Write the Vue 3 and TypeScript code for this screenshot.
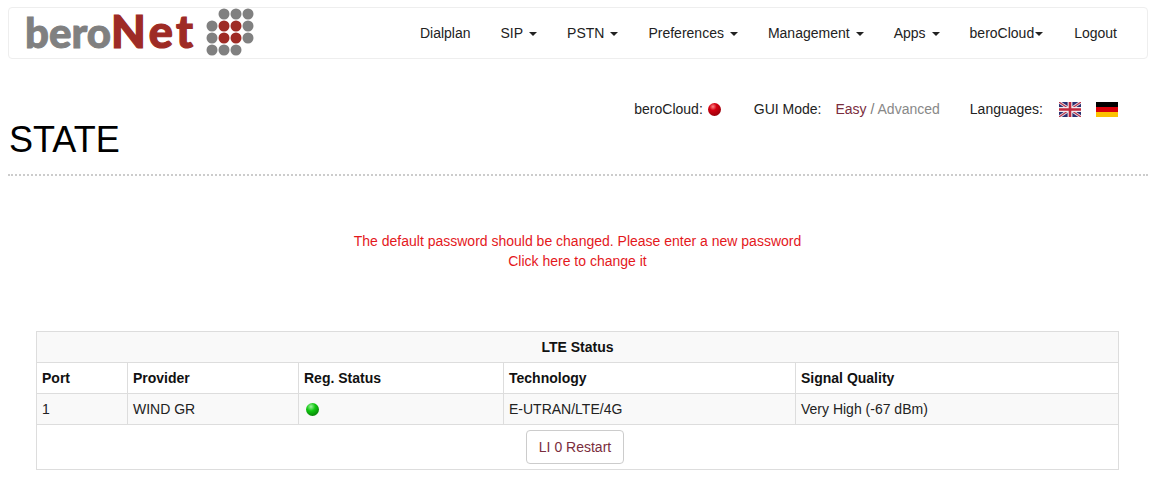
<script setup lang="ts">
const navItems: { label: string; caret: boolean; tight?: boolean }[] = [
  { label: 'Dialplan', caret: false },
  { label: 'SIP', caret: true },
  { label: 'PSTN', caret: true },
  { label: 'Preferences', caret: true },
  { label: 'Management', caret: true },
  { label: 'Apps', caret: true },
  { label: 'beroCloud', caret: true, tight: true },
  { label: 'Logout', caret: false },
]
const dots: { x: number; y: number; red: boolean }[] = [
  [18, 6, 0], [30, 6, 0], [42, 6, 0],
  [6, 18, 0], [18, 18, 1], [30, 18, 1], [42, 18, 0],
  [6, 30, 0], [18, 30, 1], [30, 30, 1], [42, 30, 0],
  [6, 42, 0], [18, 42, 0], [30, 42, 0],
].map(([x, y, r]) => ({ x, y, red: r === 1 }))
</script>

<template>
  <div class="page">
    <nav class="navbar">
      <a class="brand">
        <span class="wordmark"><span class="bero">bero</span><span class="net">Net</span></span>
        <svg class="dots" width="48" height="48" viewBox="0 0 48 48">
          <circle v-for="(d, i) in dots" :key="i" :cx="d.x" :cy="d.y" r="5.5" :fill="d.red ? '#9e2b25' : '#808080'" />
        </svg>
      </a>
      <ul class="nav">
        <li v-for="item in navItems" :key="item.label">
          {{ item.label }}<span v-if="item.caret" class="caret" :class="{ tight: item.tight }"></span>
        </li>
      </ul>
    </nav>

    <header class="head">
      <div class="status">
        <span class="label">beroCloud:</span>
        <span class="ball red"></span>
        <span class="label gui">GUI Mode:</span>
        <span class="modes"><a class="easy">Easy</a> / <a class="adv">Advanced</a></span>
        <span class="label lang">Languages:</span>
        <svg class="flag first" width="22" height="15" viewBox="0 0 60 40" preserveAspectRatio="none">
          <rect width="60" height="40" fill="#2b2f70" />
          <path d="M0 0L60 40M60 0L0 40" stroke="#e6dfe6" stroke-width="8" />
          <path d="M0 0L60 40M60 0L0 40" stroke="#b8344a" stroke-width="3" />
          <path d="M30 0V40M0 20H60" stroke="#f0ecf0" stroke-width="13" />
          <path d="M30 0V40M0 20H60" stroke="#c0283c" stroke-width="7" />
        </svg>
        <svg class="flag" width="22" height="15" viewBox="0 0 3 3" preserveAspectRatio="none">
          <rect width="3" height="1" y="0" fill="#000" />
          <rect width="3" height="1" y="1" fill="#d8000a" />
          <rect width="3" height="1" y="2" fill="#fcc200" />
        </svg>
      </div>
      <h1>STATE</h1>
    </header>

    <div class="notice">
      <div>The default password should be changed. Please enter a new password</div>
      <div>Click here to change it</div>
    </div>

    <table class="lte">
      <colgroup>
        <col class="c1" />
        <col class="c2" />
        <col class="c3" />
        <col class="c4" />
        <col />
      </colgroup>
      <tbody>
        <tr class="shade"><th colspan="5" class="title">LTE Status</th></tr>
        <tr>
          <th>Port</th>
          <th>Provider</th>
          <th>Reg. Status</th>
          <th>Technology</th>
          <th>Signal Quality</th>
        </tr>
        <tr class="shade">
          <td>1</td>
          <td>WIND GR</td>
          <td><span class="ball green"></span></td>
          <td>E-UTRAN/LTE/4G</td>
          <td>Very High (-67 dBm)</td>
        </tr>
        <tr>
          <td colspan="5" class="actions"><button type="button" class="btn">LI 0 Restart</button></td>
        </tr>
      </tbody>
    </table>
  </div>
</template>

<style>
html, body { margin: 0; background: #fff; }
</style>

<style scoped>
.page {
  font-family: "Liberation Sans", Arial, sans-serif;
  font-size: 14px;
  line-height: 20px;
  color: #333;
  height: 479px;
  overflow: hidden;
  box-sizing: border-box;
  padding-top: 7px;
}
.navbar {
  display: flex;
  justify-content: space-between;
  align-items: center;
  height: 52px;
  box-sizing: border-box;
  margin: 0 8px;
  border: 1px solid #eeeeee;
  border-radius: 4px;
  padding-right: 15px;
}
.brand {
  display: flex;
  align-items: center;
  padding-left: 16px;
}
.wordmark {
  font-family: Lato, sans-serif;
  font-weight: 900;
  font-size: 42px;
  line-height: 46px;
  width: 181px;
  margin-top: -3px;
  white-space: nowrap;
}
.bero {
  color: #808080;
  letter-spacing: 0;
  -webkit-text-stroke: 0.9px #808080;
}
.net {
  color: #9e2b25;
  font-size: 45px;
  letter-spacing: 3.5px;
  -webkit-text-stroke: 1.2px #9e2b25;
}
.dots { margin-top: -2px; }
.nav {
  display: flex;
  list-style: none;
  margin: 0;
  padding: 0;
  color: #222;
}
.nav li { padding: 0 15px; white-space: nowrap; }
.caret {
  display: inline-block;
  width: 0;
  height: 0;
  margin-left: 6px;
  vertical-align: middle;
  border-top: 4px solid #222;
  border-left: 4px solid transparent;
  border-right: 4px solid transparent;
}
.caret.tight { margin-left: 1px; margin-right: 1px; }
.head {
  margin: 0 8px;
  height: 117px;
  box-sizing: border-box;
  border-bottom: 2px dotted #ccc;
  padding-top: 40px;
}
.status {
  display: flex;
  justify-content: flex-end;
  align-items: center;
  height: 20px;
  padding-right: 30px;
  color: #222;
}
.ball {
  display: inline-block;
  width: 13px;
  height: 13px;
  border-radius: 50%;
}
.ball.red {
  margin-left: 5px;
  background: radial-gradient(circle at 38% 28%, #f88 0, #d40010 30%, #7a0008 100%);
}
.ball.green {
  vertical-align: -2px;
  margin: 0 0 0 2px;
  background: radial-gradient(circle at 38% 28%, #a0f0a0 0, #10c810 35%, #056005 100%);
}
.gui { margin-left: 33px; }
.modes { margin-left: 14px; color: #777; }
.easy { color: #7a2d3d; }
.adv { color: #888; }
.lang { margin-left: 30px; }
.flag { display: block; }
.flag.first { margin-left: 16px; margin-right: 15px; }
h1 {
  margin: 1px 0 0 1px;
  font-size: 36px;
  line-height: 40px;
  font-weight: 400;
  color: #000;
}
.notice {
  margin-top: 55px;
  margin-right: 1px;
  text-align: center;
  color: #e4181c;
}
.lte {
  margin: 60px 0 0 36px;
  width: 1083px;
  table-layout: fixed;
  border-collapse: collapse;
  color: #222;
}
.c1 { width: 91px; }
.c2 { width: 171px; }
.c3 { width: 205px; }
.c4 { width: 292px; }
.lte th, .lte td {
  border: 1px solid #ddd;
  padding: 5px;
  height: 20px;
  text-align: left;
}
.lte th { font-weight: 700; color: #111; }
.lte .title { text-align: center; }
.shade { background: #f9f9f9; }
.lte .actions { text-align: center; padding: 5px; }
.btn {
  font: inherit;
  height: 34px;
  width: 98px;
  margin-right: 5px;
  padding: 0;
  background: #fff;
  border: 1px solid #ccc;
  border-radius: 4px;
  color: #7a2d3d;
  display: inline-block;
  vertical-align: middle;
}
</style>
